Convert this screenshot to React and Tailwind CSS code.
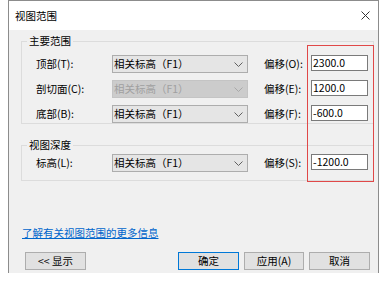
const FONT = { fontFamily: '"Noto Sans CJK SC", "Noto Sans", sans-serif' };

function Chevron({ color }) {
  return (
    <svg width="9" height="5" viewBox="0 0 9 5" className="mr-[4px]">
      <polyline points="0.5,0.5 4.5,4.5 8.5,0.5" fill="none" stroke={color} strokeWidth="1" />
    </svg>
  );
}

function Select({ disabled }) {
  return (
    <div
      className={
        disabled
          ? "w-[136px] h-[18px] flex items-center justify-between pl-[1px] border border-solid border-[#c4c4c4] bg-[#cccccc] text-[#a0a0a0]"
          : "w-[136px] h-[18px] flex items-center justify-between pl-[1px] border border-solid border-[#adadad] bg-[#e5e5e5] text-black"
      }
    >
      <span className="leading-[12px]">相关标高（F1）</span>
      <Chevron color={disabled ? "#a8a8a8" : "#606060"} />
    </div>
  );
}

function Row({ label, offLabel, value, disabled }) {
  return (
    <div className="flex items-center h-[18px]">
      <div className="w-[90px] shrink-0 flex">
        <span className="ml-[14px] leading-[12px]">{label}</span>
      </div>
      <Select disabled={disabled} />
      <div className="ml-[16px] w-[47px] shrink-0 leading-[12px]">{offLabel}</div>
      <div className="w-[57px] h-[16px] -mt-[3px] bg-white border border-solid border-[#7a7a7a] flex items-center pl-[1px] leading-[12px]">
        {value}
      </div>
    </div>
  );
}

function Btn({ children, primary, w }) {
  return (
    <div
      className={
        primary
          ? "h-[18px] flex items-center justify-center bg-[#e1e1e1] border border-solid border-[#0078d7] leading-[12px] " + w
          : "h-[18px] flex items-center justify-center bg-[#e1e1e1] border border-solid border-[#adadad] leading-[12px] " + w
      }
    >
      {children}
    </div>
  );
}

export default function App() {
  return (
    <div className="w-[387px] h-[281px] bg-white relative text-[10.5px] text-black" style={FONT}>
      <div className="ml-[8px] w-[371px] h-[273px] border-x border-t border-solid border-[#8c8c8c] bg-[#f0f0f0] flex flex-col">
        <div className="h-[29px] shrink-0 bg-white flex items-center justify-between pl-[6px] pr-[8px]">
          <span className="leading-[12px]">视图范围</span>
          <svg width="9" height="9" viewBox="0 0 9 9">
            <path d="M0.5 0.5 L8.5 8.5 M8.5 0.5 L0.5 8.5" stroke="#333" strokeWidth="1" fill="none" />
          </svg>
        </div>
        <div className="flex flex-col pl-[12px]">
          <fieldset className="mt-[5px] w-[353px] border border-solid border-[#dcdcdc] pb-0">
            <legend className="ml-[5px] px-[2px] leading-[12px]">主要范围</legend>
            <div className="mt-[8px] flex flex-col gap-[7px]">
              <Row label="顶部(T):" offLabel="偏移(O):" value="2300.0" />
              <Row label="剖切面(C):" offLabel="偏移(E):" value="1200.0" disabled />
              <Row label="底部(B):" offLabel="偏移(F):" value="-600.0" />
            </div>
          </fieldset>
          <fieldset className="mt-[15px] w-[353px] border border-solid border-[#dcdcdc] pb-[8px]">
            <legend className="ml-[5px] px-[2px] leading-[12px]">视图深度</legend>
            <div className="mt-[3px] flex flex-col">
              <Row label="标高(L):" offLabel="偏移(S):" value="-1200.0" />
            </div>
          </fieldset>
          <div className="mt-[46px] ml-[1px] leading-[12px] text-[#0066cc] underline">了解有关视图范围的更多信息</div>
          <div className="mt-[13px] flex items-center pr-[8px]">
            <div className="ml-[4px]">
              <Btn w="w-[61px]">&lt;&lt; 显示</Btn>
            </div>
            <div className="ml-auto flex gap-[5px]">
              <Btn primary w="w-[61px]">确定</Btn>
              <Btn w="w-[60px]">应用(A)</Btn>
              <Btn w="w-[61px]">取消</Btn>
            </div>
          </div>
        </div>
      </div>
      <svg className="absolute left-[307px] top-[45px]" width="67" height="137" viewBox="0 0 67 137">
        <rect x="0.5" y="0.5" width="66" height="136" fill="none" stroke="#e04848" strokeWidth="1" />
      </svg>
    </div>
  );
}
